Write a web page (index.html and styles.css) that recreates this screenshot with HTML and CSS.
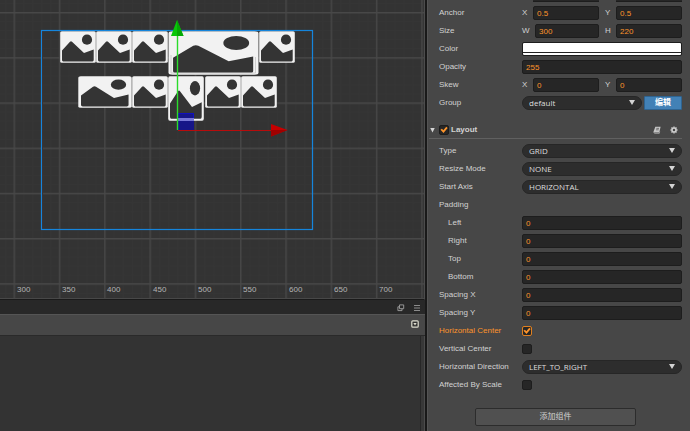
FILE: index.html
```html
<!DOCTYPE html>
<html lang="en">
<head>
<meta charset="utf-8">
<title>Scene editor</title>
<link rel="stylesheet" href="styles.css">
</head>
<body>
<div class="editor">
  <main class="workspace">
    <section class="scene" aria-label="Scene">
      <svg class="canvas">
        <defs>
          <pattern id="minor" x="14" y="12" width="9.06" height="9.06" patternUnits="userSpaceOnUse">
            <path d="M.5 0V9.06M0 .5H9.06" stroke="#353535" fill="none"/>
          </pattern>
          <pattern id="major" x="13.5" y="12" width="45.3" height="45.2" patternUnits="userSpaceOnUse">
            <path d="M.75 0V45.2M0 .75H45.3" stroke="#484848" stroke-width="1.3" fill="none"/>
          </pattern>
          <symbol id="sprite" viewBox="0 0 36 32" preserveAspectRatio="none">
            <rect x=".2" y=".2" width="35.6" height="31.6" rx="1.6" fill="#f2f2f2"/>
            <path d="M2 19.5 10 10.8Q11 9.8 12 10.8L24 22 33.7 18.6V29Q33.7 30.4 32.5 30.4H3.2Q2 30.4 2 29Z" fill="#343434"/>
            <circle cx="27" cy="8.7" r="5.1" fill="#343434"/>
          </symbol>
        </defs>
        <rect width="100%" height="100%" fill="url(#minor)"/>
        <rect width="100%" height="100%" fill="url(#major)"/>
        <use href="#sprite" x="60" y="31" width="36" height="32"/>
        <use href="#sprite" x="96" y="31" width="36" height="32"/>
        <use href="#sprite" x="132" y="31" width="36" height="32"/>
        <use href="#sprite" x="168" y="31" width="91" height="44"/>
        <path d="M171 55V73H255.500V57" stroke="#c4c4c4" stroke-width=".8" fill="none"/>
        <use href="#sprite" x="259" y="31" width="36" height="32"/>
        <use href="#sprite" x="78" y="76" width="54" height="32"/>
        <use href="#sprite" x="132" y="76" width="36" height="32"/>
        <use href="#sprite" x="168" y="76" width="36" height="45"/>
        <use href="#sprite" x="205" y="76" width="36" height="32"/>
        <use href="#sprite" x="241" y="76" width="36" height="32"/>
        <path d="M42.500 31V229" stroke="#402c24"/>
        <rect x="41.500" y="30.500" width="271" height="199" fill="none" stroke="#1585dc" stroke-width="1.200"/>
        <rect x="177" y="113" width="17" height="17" fill="#161688"/>
        <path d="M178 113.500H193.500V121" stroke="#1010c0" fill="none"/>
        <rect x="178" y="118" width="16" height="3" fill="#7777d8"/>
        <path d="M177.500 36V130" stroke="#2bdc2b" stroke-width="1.400"/>
        <path d="M177 20 171 36H183.500Z" fill="#08c808"/>
        <path d="M177 36V20L183.500 36Z" fill="#06a906"/>
        <path d="M178 130.500H271" stroke="#b80c0c"/>
        <path d="M271 124 287.500 130 271 136.500Z" fill="#c60000"/>
        <path d="M271 130H287.500L271 136.500Z" fill="#a00000"/>
        <g class="tick">
          <text x="17" y="292">300</text><text x="62" y="292">350</text><text x="107" y="292">400</text>
          <text x="153" y="292">450</text><text x="198" y="292">500</text><text x="243" y="292">550</text>
          <text x="289" y="292">600</text><text x="334" y="292">650</text><text x="379" y="292">700</text>
        </g>
      </svg>
    </section>
    <div class="tabs">
      <button class="icon" aria-label="Pop out"><svg width="8" height="8" viewBox="0 0 8 8"><path d="M2.500.9H6.700V4.700H2.500ZM2.500 2.800H.9V6.600H5V4.700" fill="none" stroke="#969696"/></svg></button>
      <button class="icon" aria-label="Menu"><svg width="8" height="8" viewBox="0 0 8 8"><path d="M1 1.500H7M1 4H7M1 6.500H7" stroke="#969696" stroke-width=".9"/></svg></button>
    </div>
    <div class="toolbar">
      <button class="icon" aria-label="Expand"><svg width="8" height="8" viewBox="0 0 8 8"><rect x=".8" y=".8" width="6.400" height="6.400" rx="1" fill="#333" stroke="#ddddce" stroke-width="1.200"/><path d="M2.300 3H5.700L4 5.400Z" fill="#ddddce"/></svg></button>
    </div>
    <div class="list"></div>
  </main>

  <aside class="inspector">
    <div class="edge"><span></span><span></span></div>
    <div class="row"><span class="name">Anchor</span><div class="pair"><label>X<input value="0.5"></label><label>Y<input value="0.5"></label></div></div>
    <div class="row"><span class="name">Size</span><div class="pair"><label>W<input class="narrow" value="300"></label><label>H<input value="220"></label></div></div>
    <div class="row"><span class="name">Color</span><button class="swatch" aria-label="Color"></button></div>
    <div class="row"><label class="name" for="opacity">Opacity</label><input id="opacity" value="255"></div>
    <div class="row"><span class="name">Skew</span><div class="pair"><label>X<input value="0"></label><label>Y<input value="0"></label></div></div>
    <div class="row"><label class="name" for="group">Group</label><div class="group"><div class="select"><select id="group"><option>default</option></select></div><button class="edit" lang="zh">编辑</button></div></div>

    <header class="component">
      <span class="fold"></span>
      <label><input type="checkbox" checked>Layout</label>
      <button class="icon" aria-label="Help"><svg width="8" height="8" viewBox="0 0 8 8"><path d="M2.300.7H7.600L6.300 6.500H1.700Q.4 6.500.7 5.200Z" fill="#c4c4c4"/><path d="M3.300 2.400H6M3 3.800H5.700" stroke="#555" stroke-width=".7"/><path d="M.8 6Q.8 7.400 2 7.400H6.300L6.700 5.500" fill="none" stroke="#b0b0b0" stroke-width=".7"/></svg></button>
      <button class="icon" aria-label="Settings"><svg width="8" height="8" viewBox="0 0 8 8"><g stroke="#d0d0d0" fill="none"><circle cx="4" cy="4" r="2" stroke-width="1.500"/><path d="M4 .5V1.700M4 6.300V7.500M.5 4H1.700M6.300 4H7.500M1.500 1.500 2.300 2.300M5.700 5.700 6.500 6.500M1.500 6.500 2.300 5.700M5.700 2.300 6.500 1.500" stroke-width="1.300"/></g></svg></button>
    </header>

    <div class="row"><label class="name" for="type">Type</label><div class="select"><select id="type"><option>GRID</option></select></div></div>
    <div class="row"><label class="name" for="resize">Resize Mode</label><div class="select"><select id="resize"><option>NONE</option></select></div></div>
    <div class="row"><label class="name" for="axis">Start Axis</label><div class="select"><select id="axis"><option>HORIZONTAL</option></select></div></div>
    <div class="row"><span class="name">Padding</span></div>
    <div class="row"><label class="name sub" for="left">Left</label><input id="left" value="0"></div>
    <div class="row"><label class="name sub" for="right">Right</label><input id="right" value="0"></div>
    <div class="row"><label class="name sub" for="top">Top</label><input id="top" value="0"></div>
    <div class="row"><label class="name sub" for="bottom">Bottom</label><input id="bottom" value="0"></div>
    <div class="row"><label class="name" for="sx">Spacing X</label><input id="sx" value="0"></div>
    <div class="row"><label class="name" for="sy">Spacing Y</label><input id="sy" value="0"></div>
    <div class="row active"><label class="name" for="hc">Horizontal Center</label><input id="hc" type="checkbox" checked></div>
    <div class="row"><label class="name" for="vc">Vertical Center</label><input id="vc" type="checkbox"></div>
    <div class="row"><label class="name" for="dir">Horizontal Direction</label><div class="select"><select id="dir"><option>LEFT_TO_RIGHT</option></select></div></div>
    <div class="row"><label class="name" for="scale">Affected By Scale</label><input id="scale" type="checkbox"></div>
    <button class="add" lang="zh">添加组件</button>
  </aside>
</div>
</body>
</html>
```
FILE: styles.css
```css
* { box-sizing: border-box; }

body {
  margin: 0;
  background: #474747;
  color: #d2d2d2;
  font: 8px/10px "Liberation Sans", "Noto Sans CJK SC", sans-serif;
}

button, input, select { font: inherit; color: inherit; margin: 0; }

.editor {
  display: grid;
  grid-template-columns: minmax(0, 1fr) 265px;
  height: 100vh;
  overflow: hidden;
}

.workspace {
  display: flex;
  flex-direction: column;
  min-width: 0;
  background: #282828;
}

.scene {
  height: 300px;
  background: #333;
  border-right: 1px solid #4c4c4c;
  border-bottom: 1px solid #1a1a1a;
}

.canvas {
  display: block;
  width: 100%;
  height: 299px;
  border-bottom: 1px solid #484848;
}

.tick { fill: #b4b4b4; }

.icon {
  display: flex;
  padding: 0;
  border: 0;
  background: none;
}

.tabs {
  display: flex;
  align-items: center;
  justify-content: flex-end;
  gap: 8px;
  height: 14px;
  padding: 1px 4px 0;
}

.toolbar {
  display: flex;
  align-items: center;
  justify-content: flex-end;
  height: 22px;
  padding: 0 6px 2px;
  background: #474747;
  border-top: 1px solid #555;
  border-bottom: 1px solid #2a2a2a;
}

.list {
  flex: 1;
  background: #333;
  border-right: 1px solid #4c4c4c;
  box-shadow: inset -3px 0 #383838, inset -4px 0 #272727;
}

.inspector {
  padding: 0 8px 0 10px;
  background: #474747;
  border-left: 2px solid #191919;
  box-shadow: inset 1px 0 #545454;
}

.edge {
  display: grid;
  grid-template-columns: 66px 66px;
  justify-content: end;
  gap: 17px;
  height: 4px;
}

.edge span {
  height: 2px;
  background: #262626;
  border-bottom: 1px solid #1d1d1d;
}

.row {
  display: grid;
  grid-template-columns: 83px minmax(0, 1fr);
  align-items: center;
  height: 18px;
  padding-left: 2px;
}

.sub { padding-left: 9px; }

.pair {
  display: grid;
  grid-template-columns: 77px 77px;
  justify-content: space-between;
}

.pair label {
  display: flex;
  align-items: center;
  justify-content: space-between;
}

input:not([type="checkbox"]) {
  width: 100%;
  height: 14px;
  padding: 0 3px;
  border: 1px solid #1d1d1d;
  border-radius: 2px;
  background: #262626;
  color: #fd942b;
}

.pair label input:not([type="checkbox"]) { width: 66px; }
.pair label input.narrow:not([type="checkbox"]) { width: 64px; }

input[type="checkbox"] {
  appearance: none;
  width: 10px;
  height: 10px;
  border: 1px solid #1d1d1d;
  border-radius: 2px;
  background: #262626;
}

input[type="checkbox"]:checked::before {
  content: "";
  display: block;
  width: 8px;
  height: 8px;
  background: #fd942b;
  clip-path: polygon(6% 48%, 24% 34%, 42% 52%, 78% 10%, 96% 26%, 44% 86%);
}

.active { color: #fd942b; }
.active input[type="checkbox"] { border-color: #e08020; }

.swatch {
  width: 100%;
  height: 14px;
  padding: 0;
  border: 1px solid #1d1d1d;
  border-radius: 2px;
  background: linear-gradient(#fff 0 9px, #222 9px 10px, #fff 10px);
}

.select { position: relative; min-width: 0; }

.select select {
  appearance: none;
  display: block;
  width: 100%;
  height: 14px;
  padding: 0 16px 0 6px;
  border: 1px solid #262626;
  border-radius: 7px;
  background: #2d2d2d;
  font-family: "Open Sans", "Noto Sans", sans-serif;
  color: #dedede;
}

.select::after {
  content: "";
  position: absolute;
  top: 4px;
  right: 7px;
  width: 6px;
  height: 5px;
  background: #d4d4d4;
  clip-path: polygon(0 0, 100% 0, 50% 100%);
  pointer-events: none;
}

.group {
  display: grid;
  grid-template-columns: minmax(0, 1fr) 38px;
  gap: 2px;
}

.edit {
  height: 14px;
  padding: 0;
  border: 1px solid #2f6491;
  border-radius: 1px;
  background: #4281b6;
  color: #fff;
  font-weight: bold;
}

.component {
  display: flex;
  align-items: center;
  gap: 4px;
  height: 17px;
  margin: 10px 0 3px -8px;
  border-bottom: 1px solid #606060;
  font-weight: bold;
}

.component label {
  display: flex;
  align-items: center;
  flex: 1;
  gap: 2px;
}

.component .icon { margin-right: 4px; }
.component .icon + .icon { margin-left: 1px; }

.fold {
  width: 5px;
  height: 5px;
  margin-left: 1px;
  background: #d4d4d4;
  clip-path: polygon(0 0, 100% 0, 50% 100%);
}

.add {
  display: block;
  width: 161px;
  height: 18px;
  margin: 14px 0 0 38px;
  padding: 0;
  border: 1px solid #2c2c2c;
  border-radius: 2px;
  background: #505050;
}
```
